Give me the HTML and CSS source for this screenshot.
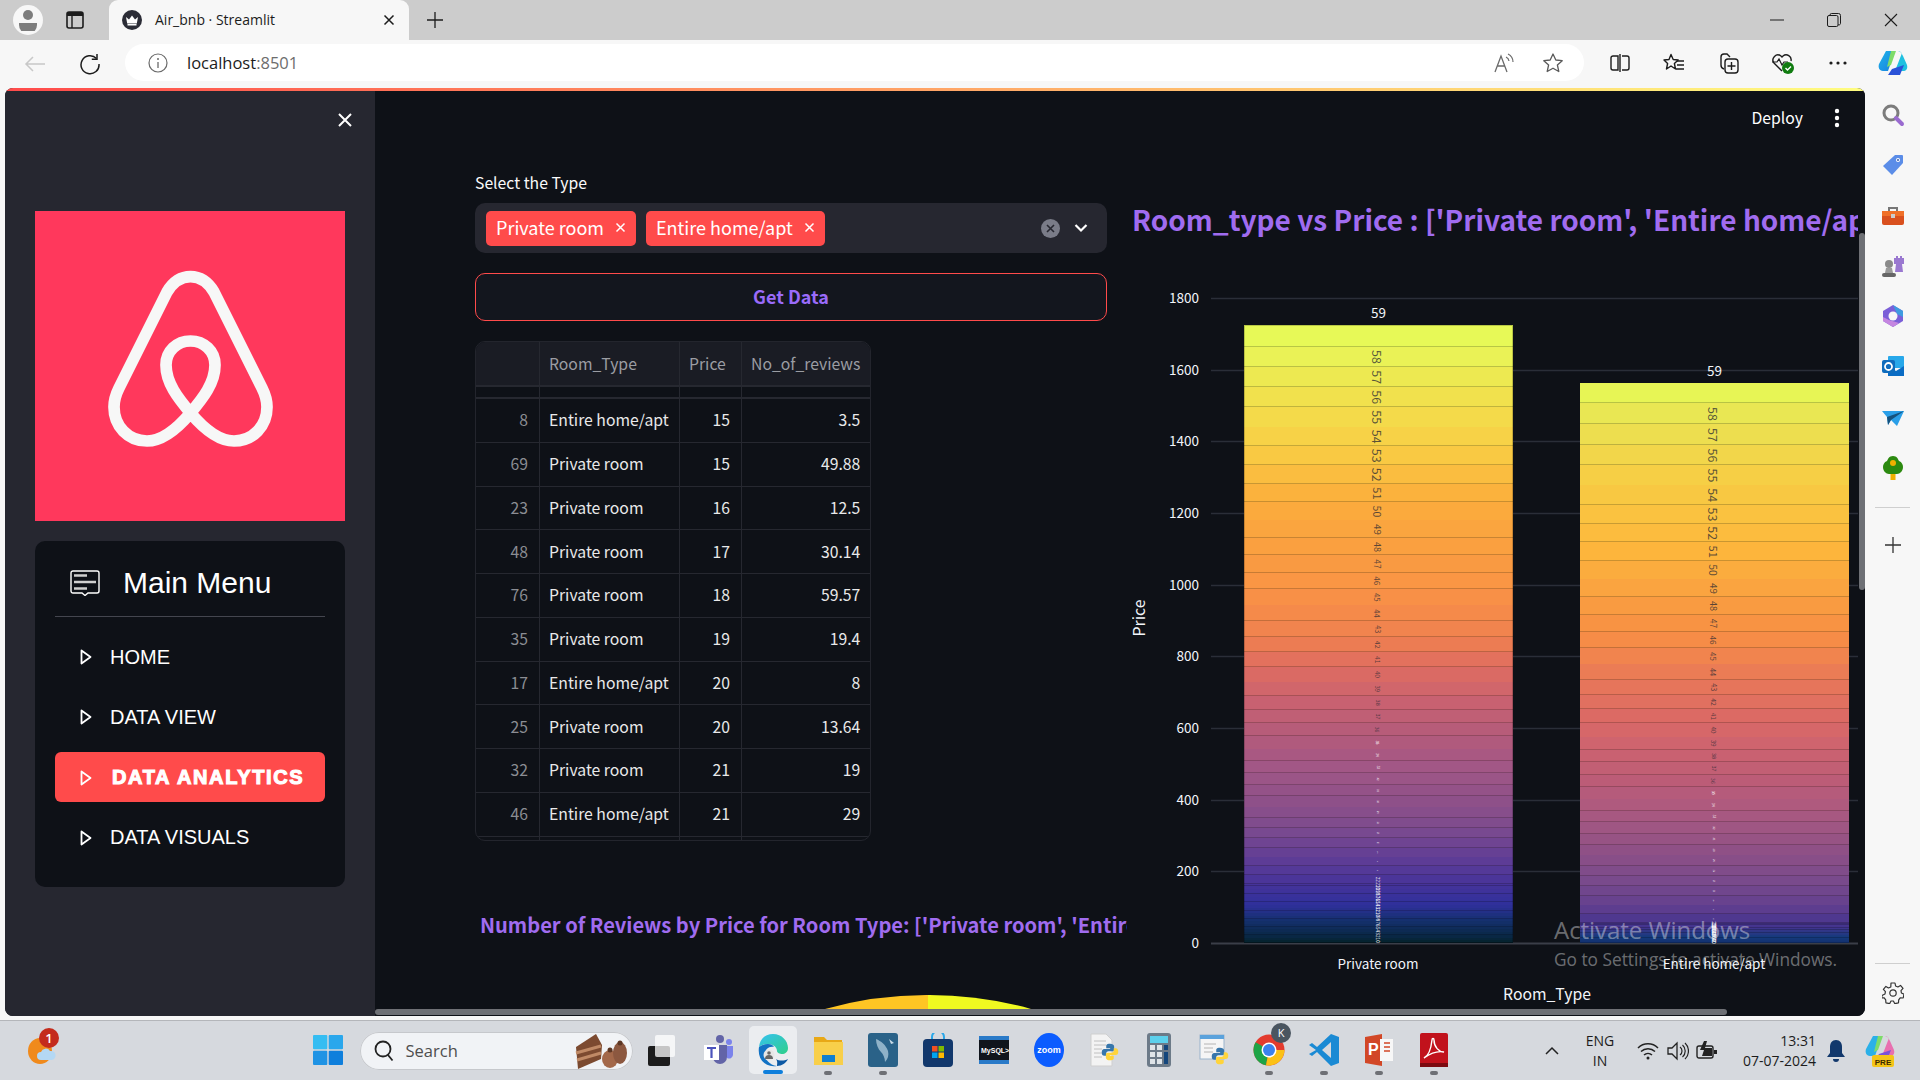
FILE: index.html
```html
<!DOCTYPE html>
<html lang="en">
<head>
<meta charset="utf-8">
<title>Air_bnb · Streamlit</title>
<link rel="stylesheet" href="styles.css">
</head>
<body>
<svg class="defs" width="0" height="0" aria-hidden="true">
  <symbol id="py" viewBox="0 0 24 24">
    <path fill="#3776ab" d="M12 1C7 1 7 3 7 4.500V7h5.200v1H4.500C2 8 1 10 1 12.500S2 17 4.500 17H7v-3c0-2 1.500-3 3-3h5c1.500 0 2.500-1 2.500-2.500v-4C17.500 2.500 15 1 12 1z"/>
    <path fill="#ffd43b" d="M12 23c5 0 5-2 5-3.500V17h-5.200v-1h7.700c2.500 0 3.500-2 3.500-4.500S22 7 19.500 7H17v3c0 2-1.500 3-3 3H9c-1.500 0-2.500 1-2.500 2.500v4C6.500 21.500 9 23 12 23z"/>
  </symbol>
  <symbol id="tri" viewBox="0 0 12 16">
    <path d="M1.500 1.500L10.500 8 1.500 14.500Z" fill="none" stroke="currentColor" stroke-width="1.800" stroke-linejoin="round"/>
  </symbol>
</svg>

<header class="tabstrip">
  <div class="profile">
    <svg width="18" height="22" viewBox="0 0 18 22"><circle cx="9" cy="6" r="5" fill="#7d7d7d"/><path d="M0 14h18v2a6 6 0 0 1-18 0z" fill="#7d7d7d"/></svg>
  </div>
  <div class="tab-side">
    <svg width="18" height="18" viewBox="0 0 18 18"><rect x="1" y="1" width="16" height="16" rx="2" fill="none" stroke="#1c1c1c" stroke-width="1.600"/><path d="M1 1h16v4H1z" fill="#1c1c1c"/><path d="M6 5v12" stroke="#1c1c1c" stroke-width="1.400"/></svg>
  </div>
  <div class="tab">
    <svg class="favicon" width="20" height="20" viewBox="0 0 20 20"><circle cx="10" cy="10" r="10" fill="#2b2c36"/><path d="M4 7l3 2.500L10 5.500l3 4L16 7l-1.200 6.500H5.200z" fill="#fff"/><rect x="5.500" y="14" width="9" height="1.500" fill="#fff"/></svg>
    <span class="tab-title">Air_bnb · Streamlit</span>
    <svg width="14" height="14" viewBox="0 0 14 14"><path d="M2.500 2.500l9 9m0-9l-9 9" stroke="#1c1c1c" stroke-width="1.500"/></svg>
  </div>
  <svg class="new-tab" width="18" height="18" viewBox="0 0 18 18"><path d="M9 1v16M1 9h16" stroke="#1c1c1c" stroke-width="1.300"/></svg>
  <div class="winctl">
    <span class="winbtn"><svg width="14" height="14" viewBox="0 0 14 14"><path d="M0 7h14" stroke="#1c1c1c"/></svg></span>
    <span class="winbtn"><svg width="14" height="14" viewBox="0 0 14 14"><rect x=".5" y="2.500" width="10.500" height="11" rx="1.500" fill="none" stroke="#1c1c1c"/><path d="M3 2.500V2A1.500 1.500 0 0 1 4.500 .5h7A2 2 0 0 1 13.500 2.500v8a1.500 1.500 0 0 1-2.500 1" fill="none" stroke="#1c1c1c"/></svg></span>
    <span class="winbtn"><svg width="14" height="14" viewBox="0 0 14 14"><path d="M1 1l12 12m0-12L1 13" stroke="#1c1c1c" stroke-width="1.100"/></svg></span>
  </div>
</header>

<nav class="toolbar">
  <span class="navbtn"><svg width="22" height="18" viewBox="0 0 22 18"><path d="M21 9H2m7-7L2 9l7 7" fill="none" stroke="#c8c8c8" stroke-width="1.500"/></svg></span>
  <span class="navbtn"><svg width="22" height="22" viewBox="0 0 22 22"><path d="M17.500 5.500A9 9 0 1 0 20 11" fill="none" stroke="#1c1c1c" stroke-width="1.500"/><path d="M18 1v5.200h-5.200" fill="none" stroke="#1c1c1c" stroke-width="1.500"/></svg></span>
  <div class="omnibox">
    <svg width="20" height="20" viewBox="0 0 20 20"><circle cx="10" cy="10" r="9" fill="none" stroke="#6a6a6a" stroke-width="1.200"/><path d="M10 9v6" stroke="#6a6a6a" stroke-width="1.300"/><circle cx="10" cy="6" r="1" fill="#6a6a6a"/></svg>
    <span class="url">localhost<span class="url-port">:8501</span></span>
    <svg class="read-aloud" width="22" height="20" viewBox="0 0 22 20"><path d="M2 19L8 3l6 16M4.500 13h7" fill="none" stroke="#6a6a6a" stroke-width="1.300"/><path d="M13 4a5 5 0 0 1 3 4M15 1a9 9 0 0 1 5 8" fill="none" stroke="#6a6a6a" stroke-width="1.200"/></svg>
    <svg class="fav-star" width="22" height="22" viewBox="0 0 22 22"><path d="M11 2l2.800 6 6.400.700-4.800 4.300 1.400 6.500L11 16.200 5.200 19.500 6.600 13 1.800 8.700 8.200 8z" fill="none" stroke="#5a5a5a" stroke-width="1.300" stroke-linejoin="round"/></svg>
  </div>
  <div class="tools">
    <span class="tool"><svg width="20" height="20" viewBox="0 0 20 20"><path d="M8 3H3a2 2 0 0 0-2 2v10a2 2 0 0 0 2 2h5zM12 3h5a2 2 0 0 1 2 2v10a2 2 0 0 1-2 2h-5M10 1v18" fill="none" stroke="#1c1c1c" stroke-width="1.400"/></svg></span>
    <span class="tool"><svg width="22" height="20" viewBox="0 0 22 20"><path d="M8 1.500l2.200 5 5 .500-3.800 3.500 1.100 5.500L8 13l-4.500 3 1.100-5.500L1 7l5-.500z" fill="none" stroke="#1c1c1c" stroke-width="1.400" stroke-linejoin="round"/><path d="M14 8h7M14 12h7M13 16h8" stroke="#1c1c1c" stroke-width="1.400"/></svg></span>
    <span class="tool"><svg width="20" height="22" viewBox="0 0 20 22"><path d="M5 17a4 4 0 0 1-3-4V5a3 3 0 0 1 3-3h3l3 3" fill="none" stroke="#1c1c1c" stroke-width="1.400"/><rect x="6" y="7" width="13" height="14" rx="3" fill="none" stroke="#1c1c1c" stroke-width="1.400"/><path d="M12.500 10v8M8.500 14h8" stroke="#1c1c1c" stroke-width="1.400"/></svg></span>
    <span class="tool"><svg width="24" height="24" viewBox="0 0 24 24"><path d="M11 20L3 12a5 5 0 0 1 7-7l1 1 1-1a5 5 0 0 1 8 5" fill="none" stroke="#1c1c1c" stroke-width="1.400"/><path d="M1 11h5l2-3 3 6 2-3h4" fill="none" stroke="#1c1c1c" stroke-width="1.200"/><circle cx="17" cy="17" r="6" fill="#107c10"/><path d="M14.500 17l2 2 3.500-3.500" fill="none" stroke="#fff" stroke-width="1.400"/></svg></span>
    <span class="tool"><svg width="18" height="4" viewBox="0 0 18 4"><circle cx="2" cy="2" r="1.600" fill="#1c1c1c"/><circle cx="9" cy="2" r="1.600" fill="#1c1c1c"/><circle cx="16" cy="2" r="1.600" fill="#1c1c1c"/></svg></span>
    <span class="tool"><svg width="30" height="28" viewBox="0 0 30 28"><defs><linearGradient id="cpa" x1="0" y1="0" x2="1" y2="1"><stop offset="0" stop-color="#1db4e8"/><stop offset="1" stop-color="#1a7ee0"/></linearGradient></defs><path d="M8 2h9l-7 20H5C1 22 0 18 1 15z" fill="url(#cpa)"/><path d="M20 2c3 0 4 3 5 5l4 9c1 4-1 6-4 6h-8l7-18z" fill="#1fc0e0"/><path d="M10 26h12l4-10-12 4z" fill="#2a52d8"/><path d="M13 2h5l-5 14-4 2z" fill="#7ddc6a"/></svg></span>
  </div>
</nav>

<div class="window">
  <div class="app">
    <div class="decoration"></div>
    <div class="app-body">
      <aside class="sidebar">
        <div class="side-close">
          <svg width="16" height="16" viewBox="0 0 16 16"><path d="M2 2l12 12m0-12L2 14" stroke="#fff" stroke-width="2"/></svg>
        </div>
        <div class="logo">
          <svg width="310" height="310" viewBox="0 0 310 310"><path d="M155.500 202C143 187 131 172 131 154C131 140 142 130 155.500 130C169 130 180 140 180 154C180 172 168 187 155.500 202C142 218 127 230 112 230C93 230 79 215 79 196C79 189 81 183 84 177L132 81C138 71 145 65.700 155.500 65.700C166 65.700 173 71 179 81L227 177C230 183 232 189 232 196C232 215 218 230 199 230C184 230 169 218 155.500 202Z" fill="none" stroke="#f7f7f7" stroke-width="11.700" stroke-linejoin="round"/></svg>
        </div>
        <div class="menu">
          <div class="menu-head">
            <svg width="30" height="26" viewBox="0 0 30 26"><path d="M3 1h24a2 2 0 0 1 2 2v18a2 2 0 0 1-2 2H18l-3 2.500L12 23H3a2 2 0 0 1-2-2V3a2 2 0 0 1 2-2z" fill="none" stroke="#fff" stroke-width="1.400"/><path d="M4 5.500h13M4 12h22M4 18.500h13" stroke="#d0d0d0" stroke-width="2.600"/></svg>
            <span class="menu-title">Main Menu</span>
          </div>
          <hr class="menu-rule">
          <ul class="menu-list">
            <li class="menu-item"><svg class="tri"><use href="#tri"/></svg><span>HOME</span></li>
            <li class="menu-item"><svg class="tri"><use href="#tri"/></svg><span>DATA VIEW</span></li>
            <li class="menu-item menu-item-active"><svg class="tri"><use href="#tri"/></svg><span>DATA ANALYTICS</span></li>
            <li class="menu-item"><svg class="tri"><use href="#tri"/></svg><span>DATA VISUALS</span></li>
          </ul>
        </div>
      </aside>

      <main class="main">
        <div class="main-head">
          <span class="deploy">Deploy</span>
          <svg width="6" height="20" viewBox="0 0 6 20"><circle cx="3" cy="3" r="2.200" fill="#fff"/><circle cx="3" cy="10" r="2.200" fill="#fff"/><circle cx="3" cy="17" r="2.200" fill="#fff"/></svg>
        </div>
        <div class="columns">
          <section class="col-left">
            <label class="field-label">Select the Type</label>
            <div class="multiselect">
              <span class="chip">Private room<svg width="11" height="11" viewBox="0 0 11 11"><path d="M1.500 1.500l8 8m0-8l-8 8" stroke="#fff" stroke-width="1.500"/></svg></span>
              <span class="chip">Entire home/apt<svg width="11" height="11" viewBox="0 0 11 11"><path d="M1.500 1.500l8 8m0-8l-8 8" stroke="#fff" stroke-width="1.500"/></svg></span>
              <svg class="clear-all" width="19" height="19" viewBox="0 0 19 19"><circle cx="9.500" cy="9.500" r="9.500" fill="#7a7c88"/><path d="M6 6l7 7m0-7l-7 7" stroke="#262730" stroke-width="1.600"/></svg>
              <svg class="chevron" width="14" height="10" viewBox="0 0 14 10"><path d="M1.500 2l5.500 5.500L12.500 2" fill="none" stroke="#fff" stroke-width="2.200"/></svg>
            </div>
            <button class="get-data">Get Data</button>
            <div class="table">
              <div class="cell head"></div><div class="cell head">Room_Type</div><div class="cell head">Price</div><div class="cell head">No_of_reviews</div>
              <div class="cell gap"></div><div class="cell gap"></div><div class="cell gap"></div><div class="cell gap"></div>
              <div class="cell idx">8</div><div class="cell">Entire home/apt</div><div class="cell num">15</div><div class="cell num">3.5</div>
              <div class="cell idx">69</div><div class="cell">Private room</div><div class="cell num">15</div><div class="cell num">49.88</div>
              <div class="cell idx">23</div><div class="cell">Private room</div><div class="cell num">16</div><div class="cell num">12.5</div>
              <div class="cell idx">48</div><div class="cell">Private room</div><div class="cell num">17</div><div class="cell num">30.14</div>
              <div class="cell idx">76</div><div class="cell">Private room</div><div class="cell num">18</div><div class="cell num">59.57</div>
              <div class="cell idx">35</div><div class="cell">Private room</div><div class="cell num">19</div><div class="cell num">19.4</div>
              <div class="cell idx">17</div><div class="cell">Entire home/apt</div><div class="cell num">20</div><div class="cell num">8</div>
              <div class="cell idx">25</div><div class="cell">Private room</div><div class="cell num">20</div><div class="cell num">13.64</div>
              <div class="cell idx">32</div><div class="cell">Private room</div><div class="cell num">21</div><div class="cell num">19</div>
              <div class="cell idx">46</div><div class="cell">Entire home/apt</div><div class="cell num">21</div><div class="cell num">29</div>
              <div class="cell tail"></div><div class="cell tail"></div><div class="cell tail"></div><div class="cell tail"></div>
            </div>
            <div class="sub-title">Number of Reviews by Price for Room Type: ['Private room', 'Entire home/apt']</div>
            <svg class="pie" width="632" height="14" viewBox="0 0 632 14"><path d="M453 0A378 378 0 0 0 300 32H453Z" fill="#fec524"/><path d="M453 0A378 378 0 0 1 606 32H453Z" fill="#f0f921"/></svg>
          </section>
          <section class="col-right">
            <div class="chart-title">Room_type vs Price : ['Private room', 'Entire home/apt']</div>
            <svg id="chart" class="chart" width="726" height="769" viewBox="1132 240 726 769"></svg>
          </section>
        </div>
        <div class="vscroll"></div>
        <div class="hscroll"></div>
      </main>
    </div>
  </div>

  <aside class="edge-rail">
    <svg width="24" height="24" viewBox="0 0 24 24"><circle cx="10" cy="10" r="7" fill="none" stroke="#7c7c7c" stroke-width="3"/><path d="M15 15l6 6" stroke="#9a6bd0" stroke-width="4" stroke-linecap="round"/></svg>
    <svg width="24" height="24" viewBox="0 0 24 24"><path d="M14 2h7a1 1 0 0 1 1 1v7L11 22 2 13z" fill="#5b8de8"/><circle cx="17" cy="7" r="2" fill="#fff"/><circle cx="17" cy="7" r="1" fill="#3458a8"/></svg>
    <svg width="24" height="24" viewBox="0 0 24 24"><path d="M8 7V4h8v3" fill="none" stroke="#777" stroke-width="2"/><rect x="1" y="7" width="22" height="14" rx="2" fill="#d9501e"/><rect x="1" y="7" width="22" height="5" fill="#f07028"/><rect x="10" y="10" width="4" height="4" fill="#ccc"/></svg>
    <svg width="24" height="24" viewBox="0 0 24 24"><path d="M15 2h2v2h2V2h2v2h2v6h-2l1 8h-8l1-8h-2V4h2z" fill="#9a78d0"/><circle cx="8" cy="10" r="4" fill="#8a8a8a"/><path d="M5 14h6l1 5H4z" fill="#9a9a9a"/><rect x="1" y="19" width="14" height="4" rx="2" fill="#666"/></svg>
    <svg width="24" height="24" viewBox="0 0 24 24"><path d="M12 1l10 6v10l-10 6-10-6V7z" fill="#7b5fd8"/><path d="M12 1l10 6v6l-6-3z" fill="#3f9be0"/><path d="M2 13v4l10 6 6-4-10-3z" fill="#c586e0"/><circle cx="12" cy="12" r="4.500" fill="#f7f7f7"/></svg>
    <svg width="24" height="24" viewBox="0 0 24 24"><rect x="7" y="2" width="16" height="12" rx="1" fill="#28a8ea"/><path d="M7 12l8 5 8-5v10H7z" fill="#0a6cc4"/><rect x="1" y="6" width="13" height="13" rx="2" fill="#0f6cbd"/><circle cx="7.500" cy="12.500" r="3.500" fill="none" stroke="#fff" stroke-width="1.800"/></svg>
    <svg width="24" height="24" viewBox="0 0 24 24"><path d="M1 6h22L16 21 10 15 7 20 6 12z" fill="#2a9fe8"/><path d="M6 12l17-6-13 9-3 5z" fill="#15527e"/></svg>
    <svg width="24" height="26" viewBox="0 0 24 26"><rect x="9.500" y="17" width="5" height="8" fill="#f0b000"/><path d="M12 1c4 0 5 3 6 5 3 1 4 4 4 6 0 4-3 7-6 7H8c-3 0-6-3-6-7 0-2 1-5 4-6 1-2 2-5 6-5z" fill="#2c8a10"/><circle cx="12" cy="8" r="3" fill="#f0b000"/></svg>
    <hr class="rail-rule">
    <svg class="rail-plus" width="16" height="16" viewBox="0 0 16 16"><path d="M8 0v16M0 8h16" stroke="#333" stroke-width="1.300"/></svg>
    <div class="rail-bottom">
      <hr class="rail-rule">
      <svg width="22" height="22" viewBox="0 0 22 22"><path d="M9 1h4l.600 3 2.300 1 2.600-1.600 2.500 3-2 2.200.400 2.400 2.600 1.200-.800 3.800-3-.200-1.500 2-.200 3-3.700.900-1.400-2.700h-2.400l-1.400 2.700-3.700-.900-.200-3-1.500-2-3 .200L.400 13.200 3 12l.400-2.400-2-2.200 2.500-3L6.500 6l2.300-1z" fill="none" stroke="#333" stroke-width="1.200" stroke-linejoin="round"/><circle cx="11" cy="11" r="3.200" fill="none" stroke="#333" stroke-width="1.200"/></svg>
    </div>
  </aside>
  <div class="watermark">
    <div class="wm-big">Activate Windows</div>
    <div class="wm-small">Go to Settings to activate Windows.</div>
  </div>
</div>

<footer class="taskbar">
  <div class="weather">
    <svg class="weather-ico" width="30" height="28" viewBox="0 0 30 28"><ellipse cx="13" cy="14" rx="12" ry="13" fill="#f08a1c"/><path d="M14 23a4 4 0 0 1 0-8 5 5 0 0 1 9-1 4.500 4.500 0 0 1 2 9z" fill="#b4d8f4"/></svg>
    <span class="badge">1</span>
  </div>
  <div class="start">
    <svg width="30" height="30" viewBox="0 0 30 30"><rect width="14.300" height="14.300" rx="1" fill="#35bdf2"/><rect x="15.700" width="14.300" height="14.300" rx="1" fill="#2aa7ec"/><rect y="15.700" width="14.300" height="14.300" rx="1" fill="#1f93e4"/><rect x="15.700" y="15.700" width="14.300" height="14.300" rx="1" fill="#0f7fdc"/></svg>
  </div>
  <div class="search">
    <svg width="20" height="22" viewBox="0 0 20 22"><circle cx="9" cy="9" r="7.500" fill="none" stroke="#222" stroke-width="1.800"/><path d="M14 15l4.500 5.500" stroke="#222" stroke-width="1.800"/></svg>
    <span class="search-text">Search</span>
    <svg class="cake" width="58" height="36" viewBox="0 0 58 36"><path d="M2 14L22 1l6 11-1 14L4 36z" fill="#7c4a30"/><path d="M2 20l25-7M3 27l24-7" stroke="#c08a66" stroke-width="3"/><ellipse cx="36" cy="26" rx="8" ry="9" fill="#a3684a"/><ellipse cx="46" cy="20" rx="7" ry="11" fill="#8c5840"/><circle cx="36" cy="17" r="2.500" fill="#5c3624"/><circle cx="46" cy="10" r="2.500" fill="#5c3624"/></svg>
  </div>
  <ul class="apps">
    <li class="app-ico task-view"><svg width="28" height="32" viewBox="0 0 28 32"><rect x="1" y="12" width="22" height="20" rx="2" fill="#1c1c1c"/><rect x="8" y="1" width="20" height="22" rx="2" fill="#fff" fill-opacity=".75"/></svg></li>
    <li class="app-ico"><svg width="30" height="32" viewBox="0 0 30 32"><circle cx="17" cy="5" r="4" fill="#6264a7"/><circle cx="26" cy="8" r="3" fill="#7b83eb"/><path d="M10 11h14v12a7 7 0 0 1-14 0z" fill="#6264a7"/><path d="M24 12h6v9a4 4 0 0 1-6 3z" fill="#7b83eb"/><rect x="1" y="11" width="15" height="15" fill="#fff"/><path d="M4 14h9M8.500 14v10" stroke="#4b53bc" stroke-width="2.200"/></svg></li>
    <li class="app-ico app-active"><svg width="32" height="34" viewBox="0 0 32 34"><defs><linearGradient id="edg" x1="0" y1="0" x2="1" y2="1"><stop offset="0" stop-color="#35c1f1"/><stop offset="1" stop-color="#2fd08a"/></linearGradient></defs><path d="M2 14C3 5 9 1 16 1c9 0 15 7 15 14 0 4-3 6-6 6-2 0-5-1-5-3 0-4-4-7-9-7-4 0-7 1-9 3z" fill="url(#edg)"/><path d="M2 14c3-2 6-3 9-3 3 0 5 1 6 3-5-1-9 2-9 7 0 5 4 11 12 12C9 35 0 27 2 14z" fill="#1272c4"/><path d="M20 33c5 0 9-3 11-7-4 2-9 2-12 0 2 3 1 5 1 7z" fill="#0c59a4"/><circle cx="12" cy="22" r="5.500" fill="#e6e6e6"/><circle cx="12" cy="20" r="1.800" fill="#666"/><path d="M8 26a4 4 0 0 1 8 0z" fill="#666"/></svg></li>
    <li class="app-ico app-open"><svg width="30" height="30" viewBox="0 0 30 30"><path d="M1 2h10l3 3h15v24H1z" fill="#e8a816"/><rect x="1" y="7" width="29" height="23" fill="#f8cf4a"/><rect x="9" y="20" width="13" height="7" fill="#0f7fd0"/></svg></li>
    <li class="app-ico app-open"><svg width="30" height="34" viewBox="0 0 30 34"><rect width="30" height="34" rx="3" fill="#2a6288"/><path d="M8 6c5 2 10 6 12 12 1 4 0 8-3 11 0-4-2-8-4-10C10 16 8 11 8 6z" fill="#8fb2c8"/><path d="M21 6l5 4-3 1z" fill="#c9dbe6"/></svg></li>
    <li class="app-ico"><svg width="30" height="34" viewBox="0 0 30 34"><path d="M9 7V4a6 6 0 0 1 12 0v3" fill="none" stroke="#2aa7e8" stroke-width="2"/><rect y="6" width="30" height="28" rx="4" fill="#12386c"/><rect x="9" y="13" width="5.500" height="5.500" fill="#f25022"/><rect x="15.500" y="13" width="5.500" height="5.500" fill="#7fba00"/><rect x="9" y="19.500" width="5.500" height="5.500" fill="#00a4ef"/><rect x="15.500" y="19.500" width="5.500" height="5.500" fill="#ffb900"/></svg></li>
    <li class="app-ico"><svg width="30" height="28" viewBox="0 0 30 28"><rect width="30" height="28" rx="1" fill="#10151c"/><rect width="30" height="4" fill="#2a7ac8"/><rect y="24" width="30" height="4" fill="#2a7ac8"/><text x="2" y="17" class="mini-text">MySQL&gt;</text></svg></li>
    <li class="app-ico"><svg width="30" height="34" viewBox="0 0 30 34"><ellipse cx="15" cy="17" rx="15" ry="17" fill="#0b5cff"/><text x="15" y="20" text-anchor="middle" class="zoom-text">zoom</text></svg></li>
    <li class="app-ico"><svg width="30" height="34" viewBox="0 0 30 34"><path d="M2 1h15l6 6v26H2z" fill="#f3f3f3" stroke="#cfcfcf"/><path d="M5 8h12M5 12h12M5 16h8M5 20h8M5 24h8" stroke="#c0c0c0"/><use href="#py" x="12" y="10" width="18" height="18"/></svg></li>
    <li class="app-ico"><svg width="24" height="34" viewBox="0 0 24 34"><rect width="24" height="34" rx="3" fill="#6c7a88"/><rect x="3" y="3" width="18" height="7" fill="#5cd0ec"/><g fill="#dfe4e8"><rect x="3" y="12" width="5" height="5"/><rect x="10" y="12" width="5" height="5"/><rect x="3" y="19" width="5" height="5"/><rect x="10" y="19" width="5" height="5"/><rect x="3" y="26" width="5" height="5"/><rect x="10" y="26" width="5" height="5"/></g><rect x="17" y="19" width="4" height="12" fill="#14467c"/><rect x="17" y="12" width="4" height="5" fill="#14467c"/></svg></li>
    <li class="app-ico"><svg width="30" height="32" viewBox="0 0 30 32"><rect x="1" y="1" width="24" height="24" fill="#f5f5f5" stroke="#9ab4cc"/><rect x="1" y="1" width="24" height="4" fill="#5aa2dc"/><path d="M5 10h12M5 14h9M5 18h9" stroke="#b4b4b4"/><use href="#py" x="12" y="12" width="18" height="20"/></svg></li>
    <li class="app-ico app-open chrome">
      <svg width="32" height="32" viewBox="0 0 32 32"><circle cx="16" cy="16" r="15.500" fill="#e33b2e"/><path d="M16 16L2.600 8.200A15.500 15.500 0 0 0 13 31.200z" fill="#1ea446"/><path d="M16 16h15.500A15.500 15.500 0 0 1 13 31.200z" fill="#fbc116"/><circle cx="16" cy="16" r="7.500" fill="#fff"/><circle cx="16" cy="16" r="6" fill="#3b82ee"/></svg>
      <span class="k-badge">K</span>
    </li>
    <li class="app-ico app-open"><svg width="30" height="34" viewBox="0 0 30 34"><path d="M22 1l8 3v26l-8 3L8 19l-5 4-3-2 7-4-7-5 3-2 5 4z" fill="#1a8ad4"/><path d="M22 9L13 17l9 8z" fill="#d6d9de"/></svg></li>
    <li class="app-ico app-open"><svg width="28" height="32" viewBox="0 0 28 32"><path d="M0 3l17-3v32L0 29z" fill="#d24726"/><rect x="15" y="5" width="13" height="22" fill="#f7f7f7"/><path d="M19 9h6M19 13h6M19 17h6" stroke="#d24726" stroke-width="1.500"/><text x="3" y="21" class="ppt-text">P</text></svg></li>
    <li class="app-ico app-open"><svg width="28" height="34" viewBox="0 0 28 34"><rect width="28" height="34" rx="2" fill="#c1121c"/><rect y="30" width="28" height="4" fill="#7c0a10"/><path d="M4 25c4-2 7-9 8-18 0-2 2-2 2 0 0 7 5 12 10 12-5-1-13 1-20 6z" fill="none" stroke="#fff" stroke-width="1.400"/></svg></li>
  </ul>
  <div class="tray">
    <span class="tray-box w30"><svg width="14" height="9" viewBox="0 0 14 9"><path d="M1 8l6-6 6 6" fill="none" stroke="#222" stroke-width="1.500"/></svg></span>
    <span class="lang">ENG<br>IN</span>
    <span class="tray-box w30"><svg width="22" height="18" viewBox="0 0 22 18"><path d="M1 6a14 14 0 0 1 20 0M4 9.500a10 10 0 0 1 14 0M7 13a6 6 0 0 1 8 0" fill="none" stroke="#222" stroke-width="1.500"/><circle cx="11" cy="16" r="1.500" fill="#222"/></svg></span>
    <span class="tray-box w30"><svg width="22" height="20" viewBox="0 0 22 20"><path d="M1 7h4l5-5v16l-5-5H1z" fill="none" stroke="#222" stroke-width="1.300"/><path d="M13 6a5 5 0 0 1 0 8M15.500 4a8 8 0 0 1 0 12M18 2a11 11 0 0 1 0 16" fill="none" stroke="#222" stroke-width="1.200"/></svg></span>
    <span class="tray-box w28"><svg width="22" height="20" viewBox="0 0 22 20"><rect x="1" y="5" width="16" height="12" rx="2" fill="none" stroke="#222" stroke-width="1.400"/><path d="M18 9h3v4h-3" fill="#222"/><path d="M8 0L4 9h4l-2 6h10V7H9l2-7z" fill="#222"/></svg></span>
    <span class="clock">13:31<br>07-07-2024</span>
    <span class="tray-box w40"><svg width="18" height="24" viewBox="0 0 18 24"><path d="M9 1c4 0 6 3 6 7v6l3 4H0l3-4V8c0-4 2-7 6-7z" fill="#12386c"/><path d="M6 20a3 3 0 0 0 6 0z" fill="#12386c"/></svg></span>
    <span class="tray-box w48 copilot">
      <svg width="30" height="32" viewBox="0 0 30 32"><path d="M8 1h9l-7 20H5C1 21 0 17 1 14z" fill="#2bb0e8"/><path d="M20 1c3 0 4 3 5 5l4 9c1 4-1 6-4 6h-8l7-18z" fill="#e870b0"/><path d="M10 25h12l4-10-12 4z" fill="#7a52d8"/><path d="M13 1h5l-5 14-4 2z" fill="#7ddc6a"/><rect x="7" y="20" width="22" height="12" rx="2" fill="#f4c518"/><text x="18" y="29.500" text-anchor="middle" class="pre-text">PRE</text></svg>
    </span>
  </div>
</footer>
<script src="chart.js"></script>
</body>
</html>
```

FILE: styles.css
```css
* { box-sizing: border-box; }
html, body { margin: 0; padding: 0; }
body {
  width: 1920px;
  height: 1080px;
  overflow: hidden;
  display: flex;
  flex-direction: column;
  background: #f7f7f7;
  font-family: "Open Sans", "Noto Sans", sans-serif;
  color: #1c1c1c;
}
.defs { position: absolute; }
ul { list-style: none; margin: 0; padding: 0; }

/* browser chrome */
.tabstrip { flex: none; height: 40px; background: #cccccc; display: flex; align-items: center; }
.profile { width: 30px; height: 30px; margin-left: 13px; border-radius: 50%; background: #f7f7f7; display: flex; align-items: center; justify-content: center; }
.tab-side { width: 30px; height: 30px; margin-left: 17px; display: flex; align-items: center; justify-content: center; }
.tab { width: 300px; height: 40px; margin-left: 19px; padding: 0 13px 0 13px; background: #f7f7f7; border-radius: 9px 9px 0 0; display: flex; align-items: center; }
.tab-title { flex: 1; margin-left: 13px; font-size: 14px; line-height: 20px; white-space: nowrap; }
.new-tab { margin-left: 17px; }
.winctl { margin-left: auto; display: flex; }
.winbtn { width: 57.3px; height: 40px; display: flex; align-items: center; justify-content: center; }

.toolbar { flex: none; height: 48px; background: #f7f7f7; display: flex; align-items: center; padding-left: 15px; gap: 15px; }
.navbtn { width: 40px; height: 37px; display: flex; align-items: center; justify-content: center; }
.omnibox { flex: none; width: 1459px; height: 37px; margin-top: -3px; background: #fff; border-radius: 19px; display: flex; align-items: center; padding: 0 20px 0 23px; }
.url { margin-left: 19px; font-size: 16.500px; color: #1c1c1c; line-height: 20px; }
.url-port { color: #6d6d6d; }
.read-aloud { margin-left: auto; }
.fav-star { margin-left: 27px; }
.tools { display: flex; margin-left: -6.600px; }
.tool { width: 54.600px; height: 37px; margin-top: -3px; display: flex; align-items: center; justify-content: center; }

/* window */
.window { flex: none; height: 932px; display: flex; position: relative; background: #f7f7f7; }
.app { flex: none; width: 1860px; height: 928px; margin-left: 5px; display: flex; flex-direction: column; border-radius: 8px; overflow: hidden; background: #0e1117; }
.decoration { flex: none; height: 3px; background: linear-gradient(90deg, #ff4b4b, #fffd80); }
.app-body { flex: 1; min-height: 0; display: flex; }

/* sidebar */
.sidebar { flex: none; width: 370px; padding: 19px 0 0 30px; background: #262730; }
.side-close { width: 318px; height: 20px; display: flex; justify-content: flex-end; align-items: center; }
.logo { width: 310px; height: 310px; margin-top: 81px; background: #ff385c; }
.menu { width: 310px; margin-top: 20px; padding: 9px 20px 25px; background: #0e1117; border-radius: 10px; color: #fff; font-family: "Liberation Sans", Arial, sans-serif; }
.menu-head { height: 66px; padding-left: 15px; display: flex; align-items: center; }
.menu-title { margin-left: 23px; font-size: 30px; line-height: 36px; }
.menu-rule { margin: 0; border: 0; height: 1px; background: #44464f; }
.menu-list { margin-top: 14px; display: flex; flex-direction: column; gap: 10.300px; }
.menu-item { height: 50px; padding: 2px 0 0 25px; display: flex; align-items: center; gap: 18px; font-size: 20px; border-radius: 6px; }
.tri { width: 12px; height: 16px; color: #fff; flex: none; }
.menu-item-active { background: #ff4b4b; font-weight: 700; letter-spacing: 1.650px; -webkit-text-stroke: 1.100px #fff; gap: 20px; }

/* main */
.main { flex: 1; min-width: 0; position: relative; overflow: hidden; background: #0e1117; color: #fafafa; font-family: "Noto Sans CJK SC", "Noto Sans", sans-serif; }
.main-head { height: 54px; padding-right: 25px; display: flex; align-items: center; justify-content: flex-end; gap: 31px; }
.deploy { font-size: 15.750px; line-height: 24px; color: #fff; }
.columns { display: flex; gap: 25px; padding: 24px 0 0 100px; }
.col-left { flex: none; width: 632px; }
.col-right { flex: none; width: 726px; }
.field-label { display: block; height: 28px; font-size: 15.750px; line-height: 28px; margin-bottom: 6px; }
.multiselect { height: 50px; background: #262730; border-radius: 10px; display: flex; align-items: center; padding: 0 19px 0 11px; gap: 10px; }
.chip { height: 35px; padding: 0 10px 2px; background: #ff4b4b; border-radius: 5px; color: #fff; display: inline-flex; align-items: center; gap: 11px; font-size: 18px; line-height: 26px; }
.clear-all { margin-left: auto; }
.chevron { margin-left: 4px; }
.get-data { display: block; width: 100%; height: 48px; margin-top: 20px; padding: 0 0 2px; border: 1px solid #ff4b4b; border-radius: 10px; background: #13161e; color: #9a6bfa; font: 600 18px/26px "Noto Sans CJK SC", sans-serif; }
.table { width: 396px; height: 500px; margin-top: 20px; display: grid; grid-template-columns: 64px 140px 62px 1fr; grid-template-rows: 45px 12px repeat(10, 43.750px) 1fr; border: 1px solid #23252d; border-radius: 10px; overflow: hidden; font-size: 15.750px; line-height: 22px; }
.cell { display: flex; align-items: center; padding: 0 11px 0 9px; border-right: 1px solid #262830; border-bottom: 1px solid #262830; white-space: nowrap; color: #e9e9ea; }
.cell:nth-child(4n) { border-right: 0; }
.head { background: #1a1c24; color: #9b9da3; border-bottom-width: 2px; }
.gap { padding: 0; border-bottom-width: 2px; }
.idx { justify-content: flex-end; color: #8b8d93; }
.num { justify-content: flex-end; }
.tail { padding: 0; border-bottom: 0; }
.sub-title { width: 652px; margin-top: 69px; padding-left: 5px; height: 30px; overflow: hidden; white-space: nowrap; font-size: 20.100px; line-height: 30px; font-weight: 700; color: #a06cf0; }
.pie { display: block; margin-top: 55px; }
.chart-title { height: 40px; margin-top: 30px; overflow: hidden; white-space: nowrap; font-size: 28px; line-height: 40px; font-weight: 700; color: #a06cf0; }
.chart { display: block; margin-top: 1px; }
.chart text { font-family: "Noto Sans CJK SC", sans-serif; fill: #f2f5fa; }
.vscroll { position: absolute; right: 0; top: 142px; width: 6px; height: 357px; background: #6e7075; border-radius: 3px; }
.hscroll { position: absolute; left: 0; bottom: 1px; width: 1352px; height: 6px; background: #6e7075; border-radius: 3px; }

/* edge rail */
.edge-rail { flex: none; width: 55px; padding-top: 15px; display: flex; flex-direction: column; align-items: center; gap: 26.300px; }
.rail-rule { flex: none; width: 35px; height: 1px; margin: 0; border: 0; background: #cfcfcf; }
.rail-plus { flex: none; margin-top: 2px; }
.rail-bottom { margin-top: auto; padding-bottom: 16px; display: flex; flex-direction: column; align-items: center; gap: 18px; }

.watermark { position: absolute; left: 1554px; top: 827px; color: rgba(255, 255, 255, .4); font-family: "Open Sans", sans-serif; white-space: nowrap; pointer-events: none; }
.wm-big { font-size: 24px; line-height: 30px; letter-spacing: -.050px; }
.wm-small { margin-top: 3px; font-size: 17.300px; line-height: 24px; }

/* taskbar */
.taskbar { flex: none; height: 60px; background: #d6d9de; border-top: 1px solid #b4b6ba; display: flex; align-items: center; padding-left: 16px; }
.weather { width: 48px; height: 44px; position: relative; display: flex; align-items: center; justify-content: center; }
.weather-ico { margin-left: 4px; }
.badge { position: absolute; left: 23px; top: -1px; width: 20px; height: 20px; border-radius: 50%; background: #c42b1c; color: #fff; font-size: 13px; line-height: 20px; text-align: center; font-weight: 600; }
.start { width: 48px; height: 48px; margin-left: 240px; margin-top: -2px; display: flex; align-items: center; justify-content: center; }
.search { width: 273px; height: 38px; margin-left: 7.500px; background: #f1f3f6; border-radius: 19px; display: flex; align-items: center; padding-left: 14px; box-shadow: inset 0 0 0 1px #c6c8cc; }
.search-text { margin-left: 12px; font-size: 16.500px; line-height: 22px; color: #4e4e4e; }
.cake { margin-left: auto; margin-right: 1px; }
.apps { display: flex; gap: 7px; margin-left: 4.400px; }
.app-ico { width: 48.100px; height: 48px; margin-top: -2px; position: relative; display: flex; align-items: center; justify-content: center; border-radius: 5px; }
.task-view { margin-right: 2px; }
.app-open::after, .app-active::after { content: ""; position: absolute; left: 50%; bottom: -1px; width: 8px; height: 4px; margin-left: -4px; border-radius: 2px; background: #6e7075; }
.app-active { background: #ebedf0; }
.app-active::after { width: 20px; margin-left: -10px; background: #0f7fdc; bottom: 0; }
.k-badge { position: absolute; right: 2px; top: -3px; width: 20px; height: 20px; border-radius: 50%; background: #4a5560; color: #fff; font-size: 11px; line-height: 20px; text-align: center; }
.mini-text { font: 700 7px "Liberation Sans", sans-serif; fill: #fff; }
.zoom-text { font: 700 9px "Liberation Sans", sans-serif; fill: #fff; }
.ppt-text { font: 700 16px "Liberation Sans", sans-serif; fill: #fff; }
.pre-text { font: 700 8px "Liberation Sans", sans-serif; fill: #3a2a00; }
.tray { margin-left: auto; padding-right: 16px; display: flex; align-items: center; }
.tray-box { height: 48px; display: flex; align-items: center; justify-content: center; }
.w30 { width: 30px; }
.w28 { width: 28px; }
.w40 { width: 40px; }
.w48 { width: 48px; }
.lang { width: 66px; text-align: center; font-size: 14px; line-height: 20px; }
.clock { width: 95px; text-align: right; font-size: 14px; line-height: 20px; }
```

FILE: chart.js
```js
(function () {
  var svg = document.getElementById('chart');
  var ZERO = 943, PER_UNIT = 0.3583;

  function lerpSeq(from, to, n) {
    var out = [];
    for (var k = 0; k < n; k++) out.push(from + (to - from) * (n === 1 ? 0 : k / (n - 1)));
    return out;
  }
  function repeat(v, n) { return lerpSeq(v, v, n); }

  // segment heights from the top of each stack (index 59) downward
  var heights1 = [21.5, 20.6, 20, 20, 20, 19, 19, 19, 18, 18, 18, 17]
    .concat(lerpSeq(17, 12, 15), lerpSeq(11.5, 8.5, 11), repeat(2.7, 22));
  var heights2 = [20.5, 21, 21, 20, 20, 19.5, 19, 18.5, 18.5, 18.5]
    .concat(lerpSeq(18, 12.5, 12), lerpSeq(12.5, 9, 15), repeat(0.85, 23));

  var stops1 = [[325,'#e6fc56'],[346,'#e8f758'],[387,'#efe54f'],[446,'#f8cf45'],[500,'#fbae3c'],[565,'#f99a42'],[590,'#fa9345'],[640,'#ef8050'],[665,'#e06d60'],[700,'#ca6270'],[733,'#b55b7a'],[767,'#a25786'],[803,'#8d5089'],[830,'#7b4a8f'],[860,'#5f3d96'],[885,'#45339a'],[905,'#2f309b'],[920,'#15306f'],[935,'#0a2848'],[943,'#04222b']];
  var stops2 = [[383,'#e6fc56'],[420,'#eae352'],[480,'#f7cd44'],[550,'#fdb63c'],[583,'#faa63f'],[633,'#f88f44'],[683,'#e8775a'],[717,'#dc6a64'],[750,'#cc6270'],[783,'#bb5c78'],[810,'#ac5a80'],[850,'#8f5086'],[880,'#7a4a8c'],[905,'#64408f'],[927,'#43348f'],[937,'#153a7c'],[943,'#12306f']];

  function hex(c) { return [1, 3, 5].map(function (i) { return parseInt(c.substr(i, 2), 16); }); }
  function colorAt(stops, y) {
    for (var i = 1; i < stops.length; i++) {
      if (y <= stops[i][0]) {
        var a = stops[i - 1], b = stops[i], t = Math.max(0, (y - a[0]) / (b[0] - a[0]));
        var ca = hex(a[1]), cb = hex(b[1]);
        return 'rgb(' + ca.map(function (v, j) { return Math.round(v + (cb[j] - v) * t); }).join(',') + ')';
      }
    }
    return stops[stops.length - 1][1];
  }
  function labelSize(i) {
    if (i >= 52) return 12.5;
    if (i >= 48) return 11 - (51 - i) * 0.6;
    if (i >= 36) return 5 + (i - 36) * 0.32;
    if (i >= 23) return 1 + (i - 23) * 0.2;
    return 4.6;
  }

  var out = [];
  [1800, 1600, 1400, 1200, 1000, 800, 600, 400, 200, 0].forEach(function (v) {
    var y = Math.round(ZERO - v * PER_UNIT);
    out.push('<line x1="1211" x2="1858" y1="' + (y + 0.5) + '" y2="' + (y + 0.5) + '" stroke="' + (v ? '#2a2e38' : '#3a3e48') + '" stroke-width="' + (v ? 1.4 : 2) + '"/>');
    out.push('<text x="1199" y="' + (y + 5) + '" text-anchor="end" font-size="13.5">' + v + '</text>');
  });

  function drawBar(x, w, top, heights, stops, outline) {
    var total = heights.reduce(function (a, b) { return a + b; }, 0);
    var scale = (ZERO - top) / total, y = top, lab = [];
    heights.forEach(function (h, n) {
      var idx = 59 - n, hh = h * scale, y0 = Math.round(y), y1 = Math.round(y + hh);
      if (y1 > y0) {
        out.push('<rect x="' + x + '" y="' + y0 + '" width="' + w + '" height="' + (y1 - y0) + '" fill="' + colorAt(stops, y + hh / 2) + '"/>');
        if (idx > 21 ? idx % 5 !== 0 : idx % 3 === 0) {
          out.push('<rect x="' + x + '" y="' + (y1 - 1) + '" width="' + w + '" height="1" fill="rgba(0,0,0,.2)"/>');
        }
      }
      if (idx < 59) {
        var cy = y + hh / 2, cx = x + w / 2 - 1, light = idx < 36;
        lab.push('<text x="' + cx + '" y="' + cy.toFixed(1) + '" font-size="' + labelSize(idx).toFixed(1) + '" text-anchor="middle" dominant-baseline="central" transform="rotate(90 ' + cx + ' ' + cy.toFixed(1) + ')" style="fill:' + (light ? '#fff' : 'rgba(40,40,50,.75)') + '">' + idx + '</text>');
      }
      y += hh;
    });
    if (outline) out.push('<rect x="' + x + '.5" y="' + top + '.5" width="' + (w - 1) + '" height="' + (ZERO - top - 1) + '" fill="none" stroke="rgba(0,0,0,.2)"/>');
    out.push(lab.join(''));
    out.push('<text x="' + (x + w / 2) + '" y="' + (top - 7) + '" font-size="13.5" text-anchor="middle">59</text>');
  }
  drawBar(1244, 269, 325, heights1, stops1, true);
  drawBar(1580, 269, 383, heights2, stops2, false);

  out.push('<text x="1378" y="969" font-size="13.5" text-anchor="middle">Private room</text>');
  out.push('<text x="1714" y="969" font-size="13.5" text-anchor="middle">Entire home/apt</text>');
  out.push('<text x="1547" y="1000" font-size="15.75" text-anchor="middle">Room_Type</text>');
  out.push('<text x="1138" y="618" font-size="15.75" text-anchor="middle" dominant-baseline="central" transform="rotate(-90 1138 618)">Price</text>');
  svg.innerHTML = out.join('');
})();
```
